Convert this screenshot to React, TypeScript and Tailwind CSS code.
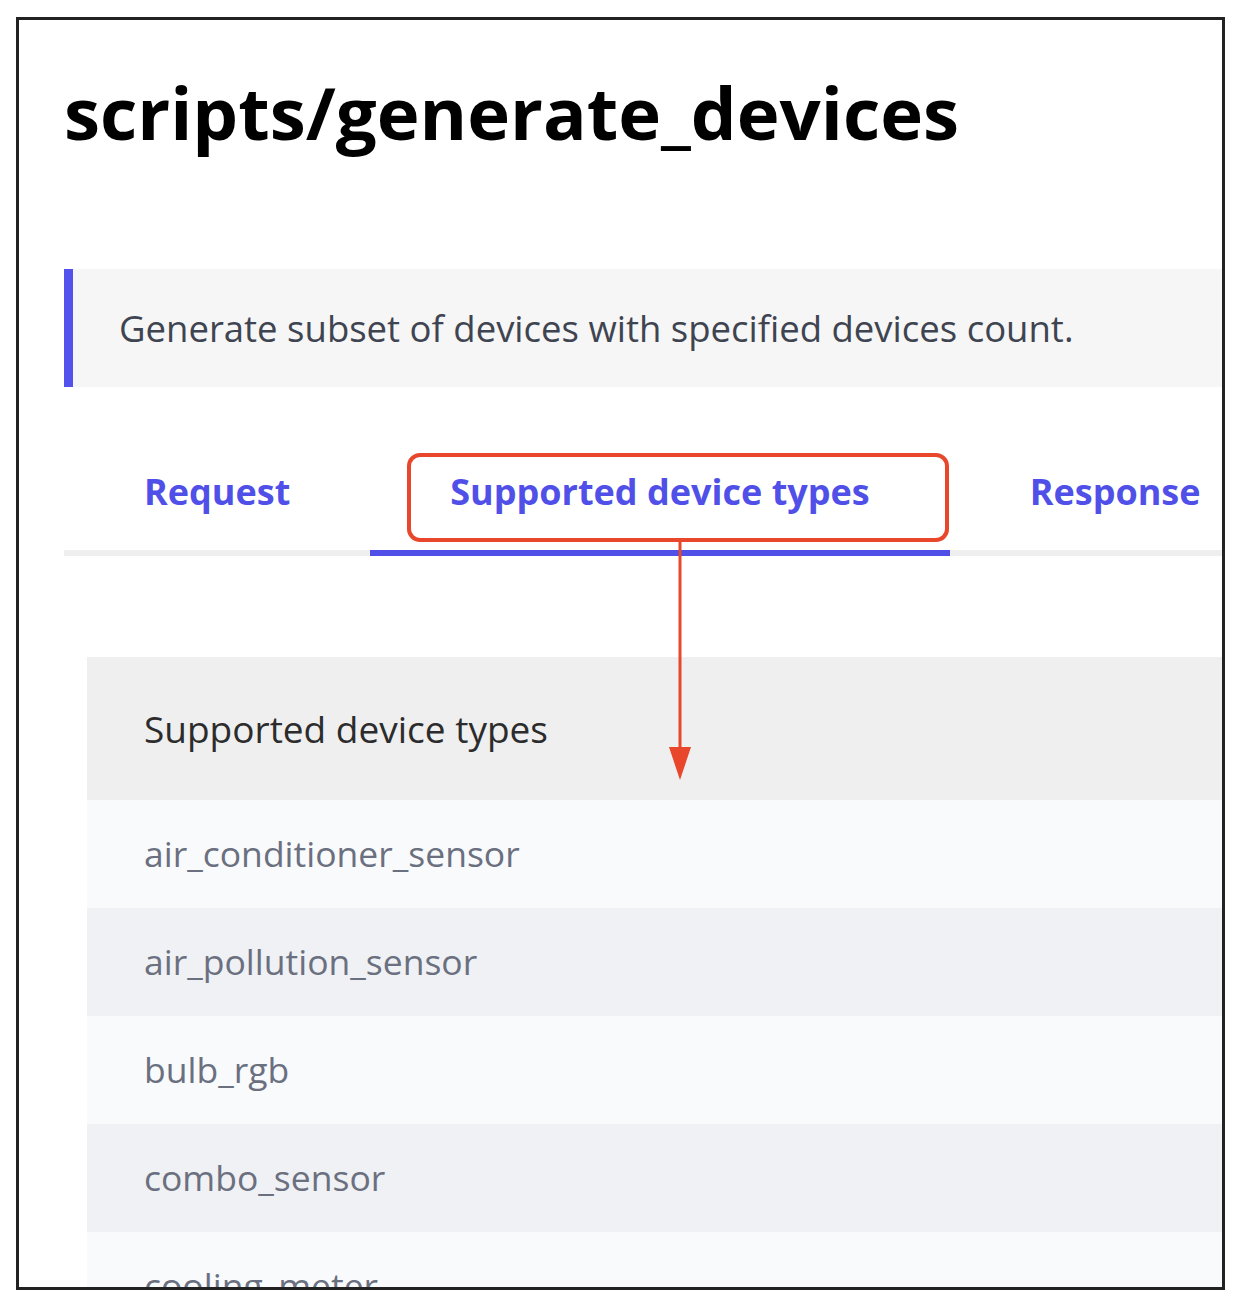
import React from "react";

const rows = [
  "air_conditioner_sensor",
  "air_pollution_sensor",
  "bulb_rgb",
  "combo_sensor",
  "cooling_meter",
];

export default function App() {
  return (
    <div className="min-h-[1302px] w-[1236px] bg-white" style={{ fontFamily: "'Open Sans', Lato, sans-serif" }}>
      <div className="relative ml-[16px] mt-[17px] h-[1273px] w-[1209px] overflow-hidden border-[3px] border-[#222222] bg-white">
        <div className="w-[1300px] pl-[45px]">
          <h1 className="mt-[52px] text-[72.5px] font-bold leading-[80px] text-black">
            scripts/generate_devices
          </h1>

          <div className="mt-[117px] flex h-[118px] items-center border-l-[9px] border-[#5352ed] bg-[#f6f6f6] pl-[46px]">
            <p className="text-[36.5px] text-[#3f4451]">
              Generate subset of devices with specified devices count.
            </p>
          </div>

          <div className="mt-[55px] flex border-b-[6px] border-[#efefef]">
            <div className="px-[80px] pb-[36px] pt-[28px] text-[36px] font-bold leading-[44px] text-[#5050e8]">
              Request
            </div>
            <div className="-mb-[6px] border-b-[6px] border-[#5050e8] px-[80px] pb-[36px] pt-[28px] text-[36px] font-bold leading-[44px] text-[#5050e8]">
              Supported device types
            </div>
            <div className="px-[80px] pb-[36px] pt-[28px] text-[36px] font-bold leading-[44px] text-[#5050e8]">
              Response
            </div>
          </div>

          <div className="ml-[23px] mt-[101px]">
            <div className="flex h-[143px] items-center bg-[#efefef] pl-[57px] text-[37px] text-[#2c2c2c]">
              Supported device types
            </div>
            {rows.map((r, i) => (
              <div
                key={r}
                className={
                  i % 2 === 0
                    ? "flex h-[108px] items-center bg-[#f9fafc] pl-[57px] text-[35.5px] text-[#6b7080]"
                    : "flex h-[108px] items-center bg-[#f0f1f4] pl-[57px] text-[35.5px] text-[#6b7080]"
                }
              >
                {r}
              </div>
            ))}
          </div>
        </div>

        {/* annotation box */}
        <div className="absolute left-[388px] top-[433px] h-[89px] w-[542px] rounded-[13px] border-[4px] border-[#e8472b]" />
        {/* arrow */}
        <svg className="absolute left-[648px] top-[522px]" width="26" height="240" viewBox="0 0 26 240">
          <line x1="13" y1="0" x2="13" y2="210" stroke="#e8472b" strokeWidth="3" />
          <polygon points="2,205 24,205 13,238" fill="#e8472b" />
        </svg>
      </div>
    </div>
  );
}
